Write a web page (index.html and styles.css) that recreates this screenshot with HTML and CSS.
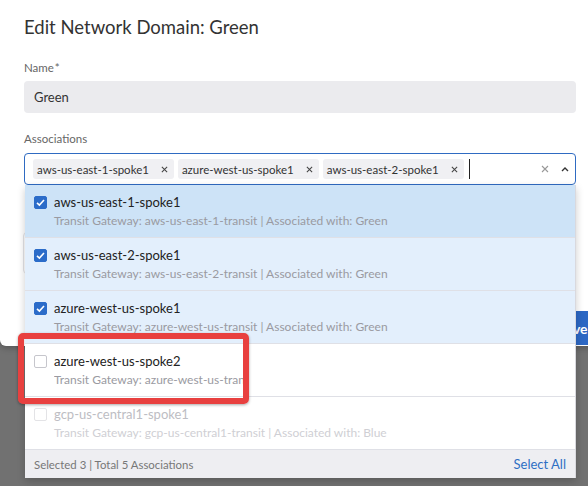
FILE: index.html
```html
<!DOCTYPE html>
<html>
<head>
<meta charset="utf-8">
<link rel="stylesheet" href="styles.css">
</head>
<body>
<div class="modal">
  <h1 class="title">Edit Network Domain: Green</h1>
  <div class="field">
    <div class="label">Name<span class="req">*</span></div>
    <div class="text-input">Green</div>
  </div>
  <div class="field assoc">
    <div class="label">Associations</div>
    <div class="multi-wrap">
      <div class="multi-input">
        <span class="chip">aws-us-east-1-spoke1<svg class="chip-x" viewBox="0 0 8 8"><path d="M1 1L7 7M7 1L1 7"/></svg></span>
        <span class="chip">azure-west-us-spoke1<svg class="chip-x" viewBox="0 0 8 8"><path d="M1 1L7 7M7 1L1 7"/></svg></span>
        <span class="chip">aws-us-east-2-spoke1<svg class="chip-x" viewBox="0 0 8 8"><path d="M1 1L7 7M7 1L1 7"/></svg></span>
        <span class="cursor"></span>
        <span class="spacer"></span>
        <svg class="clear-x" viewBox="0 0 8 8"><path d="M1 1L7 7M7 1L1 7"/></svg>
        <svg class="chevron" viewBox="0 0 8 5"><path d="M1 4L4 1L7 4"/></svg>
      </div>
      <div class="dropdown">
        <div class="option selected active">
          <span class="cb checked"><svg viewBox="0 0 13 13"><path d="M3 6.8L5.4 9L10 4"/></svg></span>
          <div class="opt-text">
            <div class="opt-title">aws-us-east-1-spoke1</div>
            <div class="opt-sub">Transit Gateway: aws-us-east-1-transit | Associated with: Green</div>
          </div>
        </div>
        <div class="option selected">
          <span class="cb checked"><svg viewBox="0 0 13 13"><path d="M3 6.8L5.4 9L10 4"/></svg></span>
          <div class="opt-text">
            <div class="opt-title">aws-us-east-2-spoke1</div>
            <div class="opt-sub">Transit Gateway: aws-us-east-2-transit | Associated with: Green</div>
          </div>
        </div>
        <div class="option selected">
          <span class="cb checked"><svg viewBox="0 0 13 13"><path d="M3 6.8L5.4 9L10 4"/></svg></span>
          <div class="opt-text">
            <div class="opt-title">azure-west-us-spoke1</div>
            <div class="opt-sub">Transit Gateway: azure-west-us-transit | Associated with: Green</div>
          </div>
        </div>
        <div class="option">
          <span class="cb"></span>
          <div class="opt-text">
            <div class="opt-title">azure-west-us-spoke2</div>
            <div class="opt-sub clipped">Transit Gateway: azure-west-us-transit</div>
          </div>
        </div>
        <div class="option disabled">
          <span class="cb"></span>
          <div class="opt-text">
            <div class="opt-title">gcp-us-central1-spoke1</div>
            <div class="opt-sub">Transit Gateway: gcp-us-central1-transit | Associated with: Blue</div>
          </div>
        </div>
        <div class="dd-footer">
          <span class="dd-count">Selected 3 | Total 5 Associations</span>
          <span class="select-all">Select All</span>
        </div>
      </div>
    </div>
  </div>
  <div class="under-field"></div>
  <div class="modal-footer">
    <button class="save">Save</button>
  </div>
</div>
<div class="annotation"></div>
</body>
</html>
```
FILE: styles.css
```css
html, body {
  margin: 0;
  padding: 0;
}
body {
  width: 588px;
  height: 486px;
  overflow: hidden;
  background: #717171;
  font-family: Lato, "Noto Sans", sans-serif;
  color: #333;
  position: relative;
}
.modal {
  width: 640px;
  height: 346px;
  box-sizing: border-box;
  padding: 15px 64px 0 24px;
  background: #fff;
  border-bottom-left-radius: 6px;
  box-shadow: 0 2px 6px rgba(0,0,0,0.25);
}
.title {
  margin: 0;
  font-size: 18.5px;
  line-height: 24px;
  font-weight: 400;
  color: #333;
}
.field {
  margin-top: 21px;
}
.field.assoc {
  margin-top: 18px;
}
.label {
  font-size: 11.5px;
  line-height: 16px;
  color: #666;
}
.req {
  margin-left: 1px;
}
.text-input {
  margin-top: 5px;
  height: 32px;
  box-sizing: border-box;
  background: #ebebee;
  border-radius: 4px;
  padding: 0 10px;
  font-size: 13px;
  line-height: 32px;
  color: #333;
}
.multi-wrap {
  position: relative;
  margin-top: 6px;
}
.multi-input {
  height: 32px;
  box-sizing: border-box;
  border: 1px solid #2f6bc2;
  border-radius: 4px;
  display: flex;
  align-items: center;
  padding: 0 6px 0 8px;
  gap: 4px;
}
.chip {
  display: inline-flex;
  align-items: center;
  height: 20px;
  background: #f0f0f3;
  border-radius: 3px;
  padding: 0 6px 0 4px;
  font-size: 11.5px;
  color: #333;
  white-space: nowrap;
}
.chip-x {
  width: 7px;
  height: 7px;
  margin-left: 12px;
  stroke: #444;
  stroke-width: 1.2;
  fill: none;
}
.cursor {
  width: 1px;
  height: 20px;
  background: #222;
  margin-left: 1px;
}
.spacer {
  flex: 1;
}
.clear-x {
  width: 8px;
  height: 8px;
  stroke: #999;
  stroke-width: 1.1;
  fill: none;
  margin-right: 8px;
}
.chevron {
  width: 8px;
  height: 5px;
  stroke: #333;
  stroke-width: 1.4;
  fill: none;
}
.dropdown {
  position: absolute;
  top: 100%;
  left: 1px;
  width: 550px;
  background: #fff;
  border-right: 1px solid #d9d9de;
  box-shadow: 0 3px 8px rgba(0,0,0,0.2);
  z-index: 2;
}
.option {
  display: flex;
  align-items: flex-start;
  padding: 7px 9px;
  box-sizing: border-box;
  border-bottom: 1px solid #dfe0e6;
  height: 53px;
  background: #fff;
}
.option.selected {
  background: #e3effc;
}
.option.active {
  background: #cde3f7;
}
.cb {
  flex: none;
  width: 13px;
  height: 13px;
  box-sizing: border-box;
  border: 1px solid #c6c6cc;
  border-radius: 2px;
  background: #fff;
  margin-top: 4px;
  margin-right: 7px;
  display: flex;
}
.cb.checked {
  background: #2b6cc9;
  border-color: #2b6cc9;
}
.cb svg {
  width: 13px;
  height: 13px;
  margin: -1px;
  stroke: #fff;
  stroke-width: 1.6;
  fill: none;
}
.opt-title {
  font-size: 13px;
  line-height: 20px;
  color: #222;
  white-space: nowrap;
}
.opt-sub {
  font-size: 12px;
  line-height: 18px;
  color: #9a9aa1;
  white-space: nowrap;
}
.opt-sub.clipped {
  width: 190px;
  overflow: hidden;
}
.option.disabled .cb {
  border-color: #e3e3e6;
}
.option.disabled .opt-title {
  color: #bdbdc3;
}
.option.disabled .opt-sub {
  color: #cfcfd4;
}
.dd-footer {
  height: 28px;
  background: #eeeef2;
  display: flex;
  align-items: center;
  justify-content: space-between;
  padding: 0 9px;
  font-size: 11.4px;
}
.dd-count {
  color: #777;
}
.select-all {
  font-size: 13px;
  color: #2f6fc4;
}
.under-field {
  margin-top: 47px;
  margin-left: -1px;
  height: 40px;
  border: 1px solid #e2e2e6;
  border-radius: 4px;
}
.modal-footer {
  display: flex;
  justify-content: flex-end;
  margin-top: 37px;
  margin-right: -31px;
}
.save {
  height: 34px;
  width: 68px;
  border: none;
  border-radius: 4px;
  background: #2d68c4;
  color: #fff;
  font-family: Lato, "Noto Sans", sans-serif;
  font-size: 14px;
  font-weight: 700;
  padding: 0;
}
.annotation {
  position: absolute;
  left: 18px;
  top: 333px;
  width: 231px;
  height: 71px;
  box-sizing: border-box;
  border: 6px solid #e8403f;
  border-radius: 5px;
  box-shadow: 0 1px 3px rgba(0,0,0,0.35);
  z-index: 5;
}
```
